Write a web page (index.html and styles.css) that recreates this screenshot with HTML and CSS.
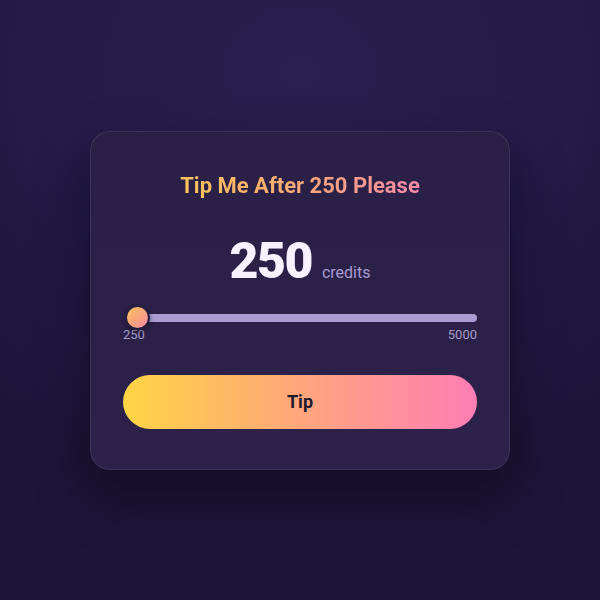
FILE: index.html
```html
<!DOCTYPE html>
<html lang="en">
<head>
<meta charset="utf-8">
<title>Tip</title>
<link rel="stylesheet" href="styles.css">
</head>
<body>
<main class="card">
  <h1 class="title">Tip Me After 250 Please</h1>
  <div class="amount">
    <span class="amount-value">250</span>
    <span class="amount-unit">credits</span>
  </div>
  <div class="slider">
    <div class="track"></div>
    <div class="thumb"></div>
  </div>
  <div class="range-labels">
    <span>250</span>
    <span>5000</span>
  </div>
  <button class="tip-btn" type="button">Tip</button>
</main>
</body>
</html>
```
FILE: styles.css
```css
html, body {
  margin: 0;
  padding: 0;
}
body {
  width: 600px;
  height: 600px;
  display: flex;
  align-items: center;
  justify-content: center;
  font-family: Roboto, "Liberation Sans", sans-serif;
  background: radial-gradient(ellipse 80% 70% at 50% 12%, #2a2050 0%, #241b47 55%, #1d1538 100%);
}
.card {
  box-sizing: border-box;
  width: 420px;
  padding: 40px 32px 40px;
  border-radius: 20px;
  background: linear-gradient(180deg, #2a2046 0%, #2c2149 100%);
  border: 1px solid rgba(255, 255, 255, 0.08);
  box-shadow: 0 24px 50px rgba(10, 6, 22, 0.55);
  display: flex;
  flex-direction: column;
}
.title {
  margin: 0;
  font-size: 22px;
  line-height: 28px;
  font-weight: 700;
  text-align: center;
  background: linear-gradient(90deg, #fcc35a 0%, #f9a878 50%, #f68aa8 100%);
  -webkit-background-clip: text;
  background-clip: text;
  color: transparent;
  align-self: center;
}
.amount {
  margin-top: 36px;
  display: flex;
  justify-content: center;
  align-items: baseline;
  gap: 10px;
}
.amount-value {
  font-size: 50px;
  line-height: 50px;
  font-weight: 900;
  color: #f6f2ff;
  letter-spacing: -1.5px;
}
.amount-unit {
  font-size: 16px;
  color: #a89bd1;
}
.slider {
  position: relative;
  margin-top: 22px;
  height: 20px;
}
.track {
  position: absolute;
  left: 12px;
  right: 0;
  top: 6px;
  height: 8px;
  border-radius: 4px;
  background: #a89cd0;
}
.thumb {
  position: absolute;
  left: 2px;
  top: -3px;
  width: 25px;
  height: 25px;
  box-sizing: border-box;
  border-radius: 50%;
  border: 2px solid #251d3f;
  background: linear-gradient(135deg, #ffc65c 0%, #f9a57c 50%, #f48aa6 100%);
  box-shadow: 0 2px 5px rgba(10, 6, 22, 0.4);
}
.range-labels {
  display: flex;
  justify-content: space-between;
  font-size: 13px;
  line-height: 14px;
  color: #a59cc6;
}
.tip-btn {
  margin-top: 33px;
  height: 54px;
  border: none;
  border-radius: 27px;
  background: linear-gradient(90deg, #ffd545 0%, #ffb36a 35%, #ff9a8f 65%, #ff7db5 100%);
  font-family: Roboto, "Liberation Sans", sans-serif;
  font-size: 18px;
  font-weight: 700;
  color: #1e1a2c;
  cursor: pointer;
}
```
